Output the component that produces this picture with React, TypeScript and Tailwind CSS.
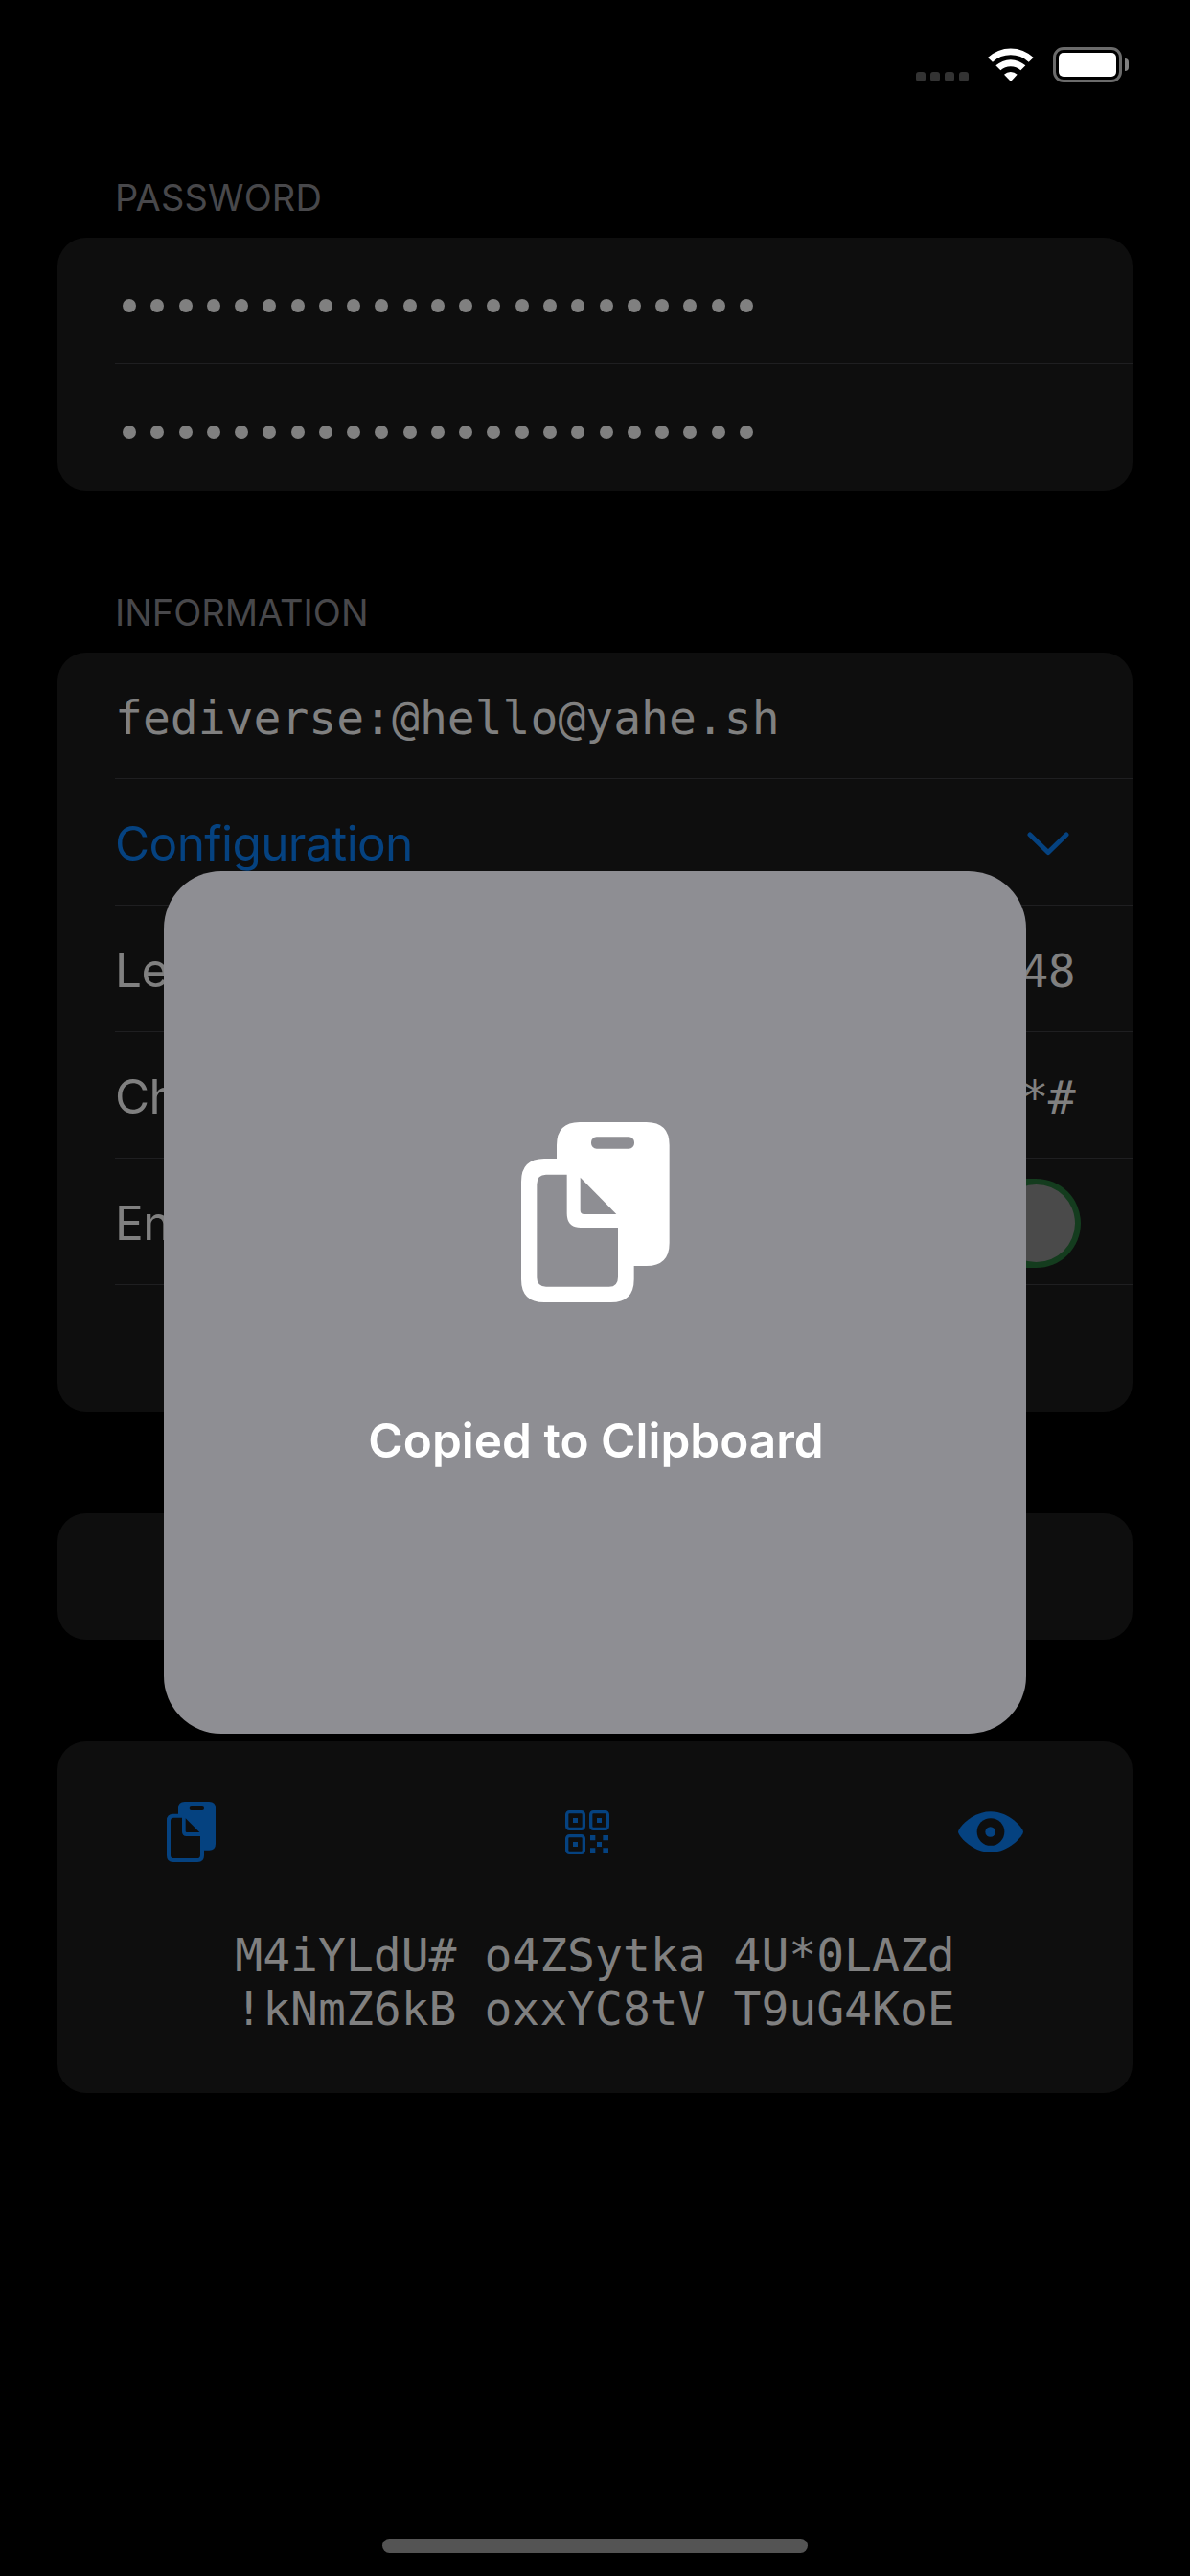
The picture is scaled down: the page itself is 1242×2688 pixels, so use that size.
import type { ReactNode } from "react";

const DOTS = Array.from({ length: 23 }, (_, i) => i);

function WifiIcon() {
  return (
    <svg viewBox="305 57 144 108" className="h-9 w-12" fill="#fff">
      <path d="M305 90A104 104 0 0 1 448 90L433 104A82 82 0 0 0 320 104Z" />
      <path d="M330 115A69 69 0 0 1 423 115L408 130A47 47 0 0 0 345 130Z" />
      <path d="M356 143A31 31 0 0 1 397 143L377 165Z" />
    </svg>
  );
}

function CopyIconLarge() {
  return (
    <svg viewBox="72 93 465 564" className="h-[188px] w-[155px]">
      <path fill="#fff" d="M183 207V165Q183 93 255 93H464Q536 93 536 165V471Q536 543 464 543H425V585Q425 657 353 657H144Q72 657 72 585V279Q72 207 144 207Z" />
      <g fill="#8e8e93">
        <rect x="291" y="139" width="135" height="37" rx="17" />
        <path d="M150 257H215V378Q215 423 258 423H375V578Q375 608 347 608H150Q121 608 121 580V287Q121 257 150 257Z" />
        <path d="M257 266L370 381H269Q257 381 257 369Z" />
      </g>
    </svg>
  );
}

function CopyIcon() {
  return (
    <svg viewBox="102 90 153 189" className="h-[63px] w-[51px]">
      <path fill="#054280" d="M138 128V110Q138 90 158 90H235Q255 90 255 110V222Q255 242 235 242H219V259Q219 279 199 279H122Q102 279 102 259V148Q102 128 122 128Z" />
      <g fill="#0e0e0e">
        <rect x="173" y="105" width="46" height="12" rx="6" />
        <path d="M124 140H150V184Q150 198 164 198H207V257Q207 267 197 267H124Q114 267 114 257V150Q114 140 124 140Z" />
        <path d="M161 142L205 186H165Q161 186 161 182Z" />
      </g>
    </svg>
  );
}

function QrIcon() {
  return (
    <svg viewBox="93 117 138 138" className="size-[46px]" fill="#054280">
      <g fill="none" stroke="#054280" strokeWidth="10">
        <rect x="98" y="122" width="53" height="53" rx="8" />
        <rect x="173" y="122" width="53" height="53" rx="8" />
        <rect x="98" y="197" width="53" height="53" rx="8" />
      </g>
      <path d="M117 141h15v15h-15zM192 141h15v15h-15zM117 216h15v15h-15zM192 216h15v15h-15zM171 195h16v16h-16zM211 195h17v16h-17zM171 235h16v17h-16zM211 235h17v17h-17z" />
    </svg>
  );
}

function EyeIcon() {
  return (
    <svg viewBox="93 121 204 128" className="h-[43px] w-[68px]">
      <path fill="#054280" d="M93 185C93 174 135 121 195 121S297 174 297 185S255 249 195 249S93 196 93 185Z" />
      <circle cx="195" cy="185" r="43" fill="#0e0e0e" />
      <circle cx="194" cy="185" r="16" fill="#054280" />
    </svg>
  );
}

function Row({ children, last }: { children?: ReactNode; last?: boolean }) {
  return (
    <div className={last ? "ml-[60px] flex h-[132px] items-center justify-between pt-[3px] pr-[60px]" : "ml-[60px] flex h-[132px] items-center justify-between border-b border-[#1f1f21] pt-[3px] pr-[60px]"}>
      {children}
    </div>
  );
}

function Mono({ children }: { children: ReactNode }) {
  return <span className="pt-px font-['DejaVu_Sans_Mono',monospace] text-[48px]">{children}</span>;
}

function PasswordDots() {
  return (
    <div className="ml-2 flex w-[658px] justify-between pt-[7px]">
      {DOTS.map((i) => (
        <span key={i} className="size-3.5 rounded-full bg-[#808080]" />
      ))}
    </div>
  );
}

export default function App() {
  return (
    <div className="relative flex h-[2688px] w-[1242px] flex-col overflow-hidden bg-black px-[60px] font-[Inter,sans-serif] text-[49.5px] text-[#808080]">
      <div className="-mr-[60px] flex h-[135px] shrink-0 items-start justify-end pt-[49px] pr-16">
        <div className="mt-[26px] mr-5 flex gap-[5px]">
          {[0, 1, 2, 3].map((i) => (
            <span key={i} className="size-2.5 rounded-[3px] bg-[#333]" />
          ))}
        </div>
        <div className="mr-5"><WifiIcon /></div>
        <div className="flex items-center gap-[3px]">
          <div className="h-[37px] w-[72px] rounded-[11px] border-3 border-[#6b6b6b] p-[3px]">
            <div className="h-full rounded-[5px] bg-white" />
          </div>
          <div className="h-[13px] w-1 rounded-r-full bg-[#808080]" />
        </div>
      </div>

      <h2 className="ml-[60px] flex h-[113px] items-end pb-[18px] text-[38px] leading-[48px] tracking-[0.15px] text-[#48484b]">PASSWORD</h2>
      <section className="rounded-[30px] bg-[#0e0e0e]">
        <Row><PasswordDots /></Row>
        <Row last><PasswordDots /></Row>
      </section>

      <h2 className="ml-[60px] flex h-[169px] items-end pb-[18px] text-[38px] leading-[48px] text-[#48484b]">INFORMATION</h2>
      <section className="rounded-[30px] bg-[#0e0e0e] tracking-[-0.6px]">
        <Row><span className="tracking-normal"><Mono>fediverse:@hello@yahe.sh</Mono></span></Row>
        <Row>
          <span className="text-[#054280]">Configuration</span>
          <svg viewBox="0 0 44 25" className="mr-1.5 h-[25px] w-11" fill="none" stroke="#054280" strokeWidth="5" strokeLinecap="round" strokeLinejoin="round"><path d="M3 3L22 21.500L41 3" /></svg>
        </Row>
        <Row><span>Length</span><Mono>48</Mono></Row>
        <Row><span>Characters</span><Mono>*#</Mono></Row>
        <Row>
          <span>Enforce</span>
          <span className="-mr-1.5 flex h-[93px] w-[153px] justify-end rounded-full bg-[#143c1e] p-1.5"><span className="size-[81px] rounded-full bg-[#4a4a4a]" /></span>
        </Row>
        <Row last />
      </section>

      <section className="mt-[106px] h-[132px] shrink-0 rounded-[30px] bg-[#0e0e0e]" />

      <section className="mt-[106px] h-[367px] shrink-0 rounded-[30px] bg-[#0e0e0e]">
        <div className="mx-[114px] flex h-[189px] items-center justify-between">
          <CopyIcon /><QrIcon /><EyeIcon />
        </div>
        <p className="mt-[6px] text-center font-['DejaVu_Sans_Mono',monospace] text-[48px] leading-[56px]">
          M4iYLdU# o4ZSytka 4U*0LAZd<br />!kNmZ6kB oxxYC8tV T9uG4KoE
        </p>
      </section>

      <div className="absolute top-[909px] left-[171px] flex size-[900px] flex-col items-center rounded-[60px] bg-[#8e8e93] pt-[262px]">
        <CopyIconLarge />
        <p className="mt-[114px] pl-0.5 text-[49.5px] leading-[60px] font-semibold text-white">Copied to Clipboard</p>
      </div>
      <div className="absolute top-[2649px] left-[399px] h-[15px] w-[444px] rounded-full bg-[#545454]" />
    </div>
  );
}
